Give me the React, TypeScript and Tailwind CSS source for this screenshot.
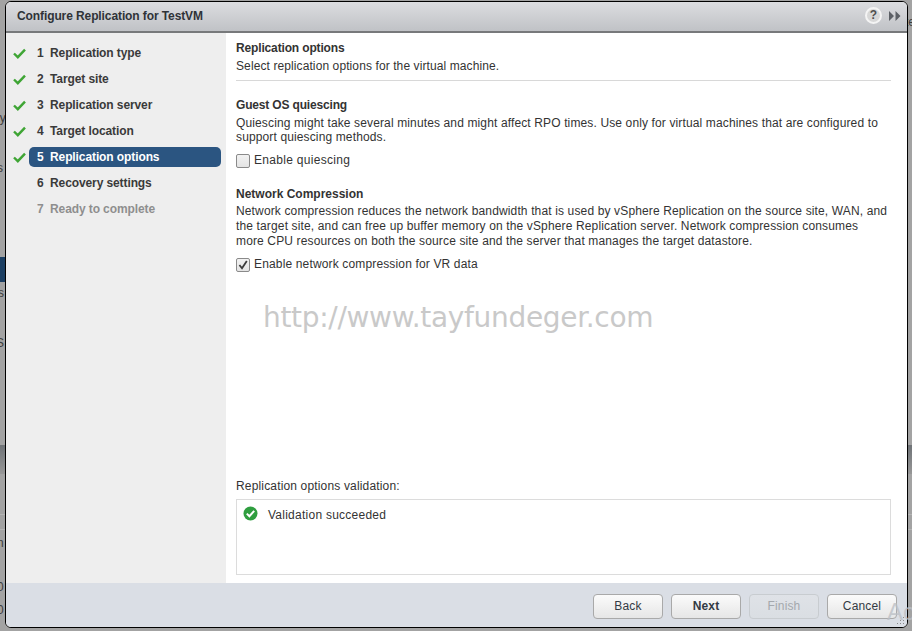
import React from "react";

const steps = [
  { n: 1, name: "Replication type", done: true },
  { n: 2, name: "Target site", done: true },
  { n: 3, name: "Replication server", done: true },
  { n: 4, name: "Target location", done: true },
  { n: 5, name: "Replication options", done: true, active: true },
  { n: 6, name: "Recovery settings", done: false },
  { n: 7, name: "Ready to complete", done: false, disabled: true },
];

// fragments of the page that shows round the dialog
const behind = [
  { text: "ay", cls: "top-[111px] -left-[7px]" },
  { text: "s", cls: "top-[161px] -left-[3px]" },
  { text: "rs", cls: "top-[286px] -left-[6px]" },
  { text: "S", cls: "top-[336px] -left-[4px]" },
  { text: "n", cls: "top-[536px] -left-[3px]" },
  { text: "0", cls: "top-[580px] -left-[3px]" },
  { text: "0", cls: "top-[603px] -left-[3px]" },
  { text: "te", cls: "top-[15px] left-[905px]" },
];

const Check = () => (
  <svg width="13" height="11" viewBox="0 0 13 11" className="shrink-0">
    <path d="M1 5.5 L4.8 9.2 L12 1.6" fill="none" stroke="#3fa535" strokeWidth="2.4" />
  </svg>
);

const Checkbox = ({ checked }: { checked?: boolean }) => (
  <span className="w-[14px] h-[14px] border border-[#8a8a8a] rounded-[2px] bg-gradient-to-b from-[#f2f2f2] to-[#e4e4e4] flex items-center justify-center shrink-0">
    {checked && (
      <svg width="12" height="12" viewBox="0 0 12 12">
        <path d="M2.4 6 L5 9.2 L9.8 2" fill="none" stroke="#3c3c3c" strokeWidth="1.8" />
      </svg>
    )}
  </span>
);

const Button = ({ label, bold, disabled }: { label: string; bold?: boolean; disabled?: boolean }) => (
  <button
    className={`w-[70px] h-[25px] rounded-[4px] border bg-gradient-to-b text-[12px] tracking-[0.15px] ${
      disabled
        ? "border-[#c8ccd0] from-[#dfe2e7] to-[#dadee3] text-[#a4a8ad]"
        : "border-[#a9a9a9] from-[#fbfbfb] to-[#e6e6e6] text-[#333a44]"
    } ${bold ? "font-bold" : ""}`}
  >
    {label}
  </button>
);

export default function App() {
  return (
    <div
      className="relative w-[912px] h-[631px] overflow-hidden bg-[#a3a3a3] pl-[5px] pr-[4px] pt-px pb-[3px] text-[12px] leading-[15px] text-[#333333]"
      style={{ fontFamily: '"Liberation Sans", Arial, sans-serif' }}
    >
      <div className="absolute left-0 top-[257px] w-[6px] h-[25px] bg-[#1c3f63]" />
      <div className="absolute left-0 top-[445px] w-full h-[29px] bg-gradient-to-b from-[#6f7377] to-[#979797]" />
      <div className="absolute left-0 top-[514px] w-full h-px bg-[#b5b5b5]" />
      <div className="absolute left-0 top-[529px] w-full h-px bg-[#b5b5b5]" />
      {behind.map((b) => (
        <span key={b.cls} className={`absolute text-[#3d3d3d] ${b.cls}`}>
          {b.text}
        </span>
      ))}

      <div className="relative h-full rounded-[6px] border border-black bg-white overflow-hidden flex flex-col">
        <header className="h-[31px] shrink-0 flex items-center pl-[11px] pr-[6px] border-b-2 border-[#77797b] bg-gradient-to-b from-[#dcdde0] to-[#c0c2c6]">
          <h1 className="font-bold text-[#2f3338] flex-1 tracking-[-0.1px]">Configure Replication for TestVM</h1>
          <span className="w-[17px] h-[17px] -mt-[2px] rounded-full border-2 border-[#f4f4f4] bg-[#d8d8d8] text-[#4f4f4f] font-bold text-[12px] leading-[13px] text-center">?</span>
          <svg width="12" height="10" viewBox="0 0 12 10" className="ml-[7px] -mt-[2px]">
            <path d="M0 0 L5 5 L0 10 Z M6.5 0 L11.5 5 L6.5 10 Z" fill="#5c6066" />
          </svg>
        </header>

        <div className="flex-1 flex min-h-0">
          <nav className="w-[220px] shrink-0 bg-[#eeeeee] pt-[7px] pl-[6px] pr-[5px]">
            {steps.map((s) => (
              <div key={s.n} className="h-[26px] flex items-center">
                <span className="w-[17px] shrink-0 pl-px">{s.done && <Check />}</span>
                <div
                  className={`flex-1 h-[20px] flex items-center rounded-[5px] pl-[8px] font-bold tracking-[-0.1px] ${
                    s.active ? "bg-[#2b5581] text-white" : s.disabled ? "text-[#8e8e8e]" : "text-[#3a3a3a]"
                  }`}
                >
                  <span className="w-[13px]">{s.n}</span>
                  {s.name}
                </div>
              </div>
            ))}
          </nav>

          <main className="flex-1 min-w-0 flex flex-col pl-[10px] pr-[16px] pt-[8px] pb-[8px] tracking-[0.14px]">
            <h2 className="font-bold tracking-[-0.15px]">Replication options</h2>
            <p className="mt-[3px] tracking-[0.1px]">Select replication options for the virtual machine.</p>
            <div className="mt-[6px] h-px bg-[#d8d8d8]" />

            <h3 className="font-bold mt-[17px] tracking-[-0.17px]">Guest OS quiescing</h3>
            <p className="mt-[3px] leading-[14px] tracking-[0.13px]">
              Quiescing might take several minutes and might affect RPO times. Use only for virtual machines that are configured to
              <br />
              support quiescing methods.
            </p>
            <label className="flex items-center gap-[4px] mt-[9px] tracking-[0.3px]">
              <Checkbox />
              Enable quiescing
            </label>

            <h3 className="font-bold mt-[19px] tracking-normal">Network Compression</h3>
            <p className="mt-[2px]">
              Network compression reduces the network bandwidth that is used by vSphere Replication on the source site, WAN, and
              <br />
              the target site, and can free up buffer memory on the vSphere Replication server. Network compression consumes
              <br />
              more CPU resources on both the source site and the server that manages the target datastore.
            </p>
            <label className="flex items-center gap-[4px] mt-[8px] tracking-[0.15px]">
              <Checkbox checked />
              Enable network compression for VR data
            </label>

            <div
              className="mt-[28px] ml-[27px] whitespace-nowrap text-[28px] leading-[36px] tracking-[-0.32px] text-[#c9c9c9]"
              style={{ fontFamily: '"DejaVu Sans", sans-serif' }}
            >
              http://www.tayfundeger.com
            </div>

            <div className="flex-1" />
            <p className="tracking-[0.16px]">Replication options validation:</p>
            <div className="mt-[5px] h-[76px] border border-[#dcdcdc] px-[6px] py-[6px] flex items-start gap-[10px]">
              <svg width="15" height="15" viewBox="0 0 15 15" className="shrink-0">
                <circle cx="7.5" cy="7.5" r="7" fill="#2f9e3f" />
                <path d="M3.8 7.6 L6.4 10.2 L11.2 4.8" fill="none" stroke="#ffffff" strokeWidth="2" />
              </svg>
              <span className="mt-[2px] tracking-[0.25px]">Validation succeeded</span>
            </div>
          </main>
        </div>

        <footer className="h-[44px] shrink-0 bg-[#dadee5] flex items-start justify-end gap-[8px] pr-[10px] pt-[11px]">
          <Button label="Back" />
          <Button label="Next" bold />
          <Button label="Finish" disabled />
          <Button label="Cancel" />
        </footer>
        <svg width="12" height="10" viewBox="0 0 12 10" className="absolute right-[1px] bottom-[1px]">
          <path d="M9 1h1v1H9zM6 4h1v1H6zM9 4h1v1H9zM3 7h1v1H3zM6 7h1v1H6zM9 7h1v1H9z" fill="#8a8a8a" />
        </svg>
      </div>
      <span className="absolute left-[887px] top-[598px] text-[24px] leading-[28px] text-[#bcc0c6]/80 pointer-events-none">Ac</span>
    </div>
  );
}
